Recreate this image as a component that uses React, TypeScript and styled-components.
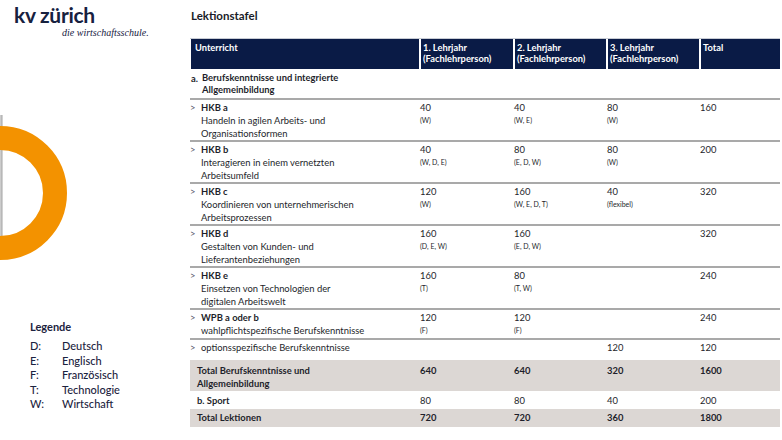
import React from 'react';
import styled, { createGlobalStyle } from 'styled-components';

const GlobalStyle = createGlobalStyle`
    html, body {
        margin: 0;
        padding: 0;
        background: #ffffff;
    }
    body {
        font-family: Lato, 'Liberation Sans', sans-serif;
        color: #1e1f2b;
    }
`;

const Page = styled.div`
    display: flex;
    width: 782px;
    height: 440px;
    overflow: hidden;
    background: #ffffff;
`;

const Sidebar = styled.aside`
    display: flex;
    flex-direction: column;
    width: 190px;
    flex-shrink: 0;
`;

const Logo = styled.div`
    padding: 3px 0 0 14px;
    color: #17213f;
`;

const LogoMark = styled.div`
    font: 700 21px/24px Lato, 'Liberation Sans', sans-serif;
    letter-spacing: -0.3px;
`;

const Tagline = styled.div`
    margin-left: 48px;
    font: italic 10px/11px 'Liberation Serif', serif;
`;

const Decor = styled.svg`
    display: block;
    margin-top: 77px;
`;

const Legend = styled.div`
    margin-top: 55px;
    padding-left: 30px;
    color: #1c2340;
`;

const LegendTitle = styled.div`
    font: 700 11px/14px Lato, 'Liberation Sans', sans-serif;
    margin-bottom: 5px;
`;

const LegendList = styled.div`
    display: grid;
    grid-template-columns: 32px auto;
    font: 500 11px/14.5px Lato, 'Liberation Sans', sans-serif;
`;

const Main = styled.main`
    display: flex;
    flex-direction: column;
    padding-top: 9px;
    width: 590px;
`;

const Title = styled.h1`
    margin: 0 0 15px 1px;
    font: 700 11.5px/14px Lato, 'Liberation Sans', sans-serif;
    color: #1a1c28;
`;

const Table = styled.div`
    display: flex;
    flex-direction: column;
    width: 590px;
`;

const columns = '229px 94px 93px 93px 81px';

const HeaderRow = styled.div`
    display: grid;
    grid-template-columns: ${columns};
    height: 31px;
    border-top: 1px solid #c8ccd4;
    box-sizing: border-box;
`;

const HeaderCell = styled.div<{ $first?: boolean }>`
    background: #0a1b46;
    color: #ffffff;
    font: 700 9.3px/11px Lato, 'Liberation Sans', sans-serif;
    padding: 3px 2px 0 ${(p) => (p.$first ? '4px' : '2px')};
    border-left: ${(p) => (p.$first ? 'none' : '2px solid #ffffff')};
    margin-left: ${(p) => (p.$first ? '1px' : '0')};
    box-sizing: border-box;
`;

const Row = styled.div<{ $h: number; $line?: boolean; $shade?: boolean; $pad?: number }>`
    display: grid;
    grid-template-columns: ${columns};
    height: ${(p) => p.$h}px;
    box-sizing: border-box;
    border-top: ${(p) => (p.$line ? '2px solid #a9a9a9' : 'none')};
    background: ${(p) => (p.$shade ? '#dcd7d4' : 'transparent')};
    padding-top: ${(p) => p.$pad ?? 1}px;
    font: 400 9.4px/13px Lato, 'Liberation Sans', sans-serif;
`;

const LabelCell = styled.div<{ $indent?: number }>`
    display: flex;
    padding-left: ${(p) => p.$indent ?? 0}px;
`;

const Marker = styled.span<{ $bold?: boolean }>`
    width: 11px;
    flex-shrink: 0;
    font-weight: ${(p) => (p.$bold ? 700 : 400)};
    color: ${(p) => (p.$bold ? 'inherit' : '#55576a')};
`;

const LabelText = styled.div<{ $lh?: number }>`
    line-height: ${(p) => p.$lh ?? 13}px;
`;

const Strong = styled.div`
    font-weight: 700;
`;

const ValueCell = styled.div<{ $bold?: boolean }>`
    padding-left: 1px;
    font-weight: ${(p) => (p.$bold ? 700 : 400)};
`;

const Note = styled.div`
    font-size: 7px;
    line-height: 13px;
`;

type Value = { n: string; note?: string } | null;

type Module = {
    title: string;
    desc: string[];
    values: [Value, Value, Value];
    total: string;
    h: number;
};

const modules: Module[] = [
    {
        title: 'HKB a',
        desc: ['Handeln in agilen Arbeits- und', 'Organisationsformen'],
        values: [{ n: '40', note: '(W)' }, { n: '40', note: '(W, E)' }, { n: '80', note: '(W)' }],
        total: '160',
        h: 42,
    },
    {
        title: 'HKB b',
        desc: ['Interagieren in einem vernetzten', 'Arbeitsumfeld'],
        values: [{ n: '40', note: '(W, D, E)' }, { n: '80', note: '(E, D, W)' }, { n: '80', note: '(W)' }],
        total: '200',
        h: 42,
    },
    {
        title: 'HKB c',
        desc: ['Koordinieren von unternehmerischen', 'Arbeitsprozessen'],
        values: [{ n: '120', note: '(W)' }, { n: '160', note: '(W, E, D, T)' }, { n: '40', note: '(flexibel)' }],
        total: '320',
        h: 42,
    },
    {
        title: 'HKB d',
        desc: ['Gestalten von Kunden- und', 'Lieferantenbeziehungen'],
        values: [{ n: '160', note: '(D, E, W)' }, { n: '160', note: '(E, D, W)' }, null],
        total: '320',
        h: 42,
    },
    {
        title: 'HKB e',
        desc: ['Einsetzen von Technologien der', 'digitalen Arbeitswelt'],
        values: [{ n: '160', note: '(T)' }, { n: '80', note: '(T, W)' }, null],
        total: '240',
        h: 42,
    },
    {
        title: 'WPB a oder b',
        desc: ['wahlpflichtspezifische Berufskenntnisse'],
        values: [{ n: '120', note: '(F)' }, { n: '120', note: '(F)' }, null],
        total: '240',
        h: 30,
    },
];

const legend = [
    ['D:', 'Deutsch'],
    ['E:', 'Englisch'],
    ['F:', 'Französisch'],
    ['T:', 'Technologie'],
    ['W:', 'Wirtschaft'],
];

const App = () => {
    return (
        <Page>
            <GlobalStyle />
            <Sidebar>
                <Logo>
                    <LogoMark>kv zürich</LogoMark>
                    <Tagline>die wirtschaftsschule.</Tagline>
                </Logo>
                <Decor width="70" height="150" viewBox="0 0 70 150">
                    <defs>
                        <linearGradient id="edge" x1="0" x2="1" y1="0" y2="0">
                            <stop offset="0" stopColor="#d6d6d6" />
                            <stop offset="1" stopColor="#a4a4a4" />
                        </linearGradient>
                    </defs>
                    <rect x="0" y="0" width="2.5" height="123" fill="url(#edge)" />
                    <circle cx="0" cy="78" r="55" fill="none" stroke="#f39200" strokeWidth="24" />
                </Decor>
                <Legend>
                    <LegendTitle>Legende</LegendTitle>
                    <LegendList>
                        {legend.map(([k, v]) => (
                            <React.Fragment key={k}>
                                <span>{k}</span>
                                <span>{v}</span>
                            </React.Fragment>
                        ))}
                    </LegendList>
                </Legend>
            </Sidebar>
            <Main>
                <Title>Lektionstafel</Title>
                <Table>
                    <HeaderRow>
                        <HeaderCell $first>Unterricht</HeaderCell>
                        <HeaderCell>
                            1. Lehrjahr
                            <br />
                            (Fachlehrperson)
                        </HeaderCell>
                        <HeaderCell>
                            2. Lehrjahr
                            <br />
                            (Fachlehrperson)
                        </HeaderCell>
                        <HeaderCell>
                            3. Lehrjahr
                            <br />
                            (Fachlehrperson)
                        </HeaderCell>
                        <HeaderCell>Total</HeaderCell>
                    </HeaderRow>

                    <Row $h={29} $pad={3}>
                        <LabelCell $indent={1}>
                            <Marker $bold>a.</Marker>
                            <LabelText $lh={12}>
                                <Strong>Berufskenntnisse und integrierte</Strong>
                                <Strong>Allgemeinbildung</Strong>
                            </LabelText>
                        </LabelCell>
                    </Row>

                    {modules.map((m) => (
                        <Row key={m.title} $h={m.h} $line>
                            <LabelCell>
                                <Marker>&gt;</Marker>
                                <LabelText>
                                    <Strong>{m.title}</Strong>
                                    {m.desc.map((d) => (
                                        <div key={d}>{d}</div>
                                    ))}
                                </LabelText>
                            </LabelCell>
                            {m.values.map((v, i) => (
                                <ValueCell key={i}>
                                    {v && (
                                        <>
                                            <div>{v.n}</div>
                                            {v.note && <Note>{v.note}</Note>}
                                        </>
                                    )}
                                </ValueCell>
                            ))}
                            <ValueCell>{m.total}</ValueCell>
                        </Row>
                    ))}

                    <Row $h={22} $line>
                        <LabelCell>
                            <Marker>&gt;</Marker>
                            <LabelText>optionsspezifische Berufskenntnisse</LabelText>
                        </LabelCell>
                        <ValueCell />
                        <ValueCell />
                        <ValueCell>120</ValueCell>
                        <ValueCell>120</ValueCell>
                    </Row>

                    <Row $h={31} $shade $pad={4}>
                        <LabelCell $indent={7}>
                            <LabelText>
                                <Strong>Total Berufskenntnisse und</Strong>
                                <Strong>Allgemeinbildung</Strong>
                            </LabelText>
                        </LabelCell>
                        <ValueCell $bold>640</ValueCell>
                        <ValueCell $bold>640</ValueCell>
                        <ValueCell $bold>320</ValueCell>
                        <ValueCell $bold>1600</ValueCell>
                    </Row>

                    <Row $h={18} $pad={3}>
                        <LabelCell $indent={7}>
                            <Strong>b. Sport</Strong>
                        </LabelCell>
                        <ValueCell>80</ValueCell>
                        <ValueCell>80</ValueCell>
                        <ValueCell>40</ValueCell>
                        <ValueCell>200</ValueCell>
                    </Row>

                    <Row $h={18} $shade $pad={2}>
                        <LabelCell $indent={7}>
                            <Strong>Total Lektionen</Strong>
                        </LabelCell>
                        <ValueCell $bold>720</ValueCell>
                        <ValueCell $bold>720</ValueCell>
                        <ValueCell $bold>360</ValueCell>
                        <ValueCell $bold>1800</ValueCell>
                    </Row>
                </Table>
            </Main>
        </Page>
    );
};

export default App;
